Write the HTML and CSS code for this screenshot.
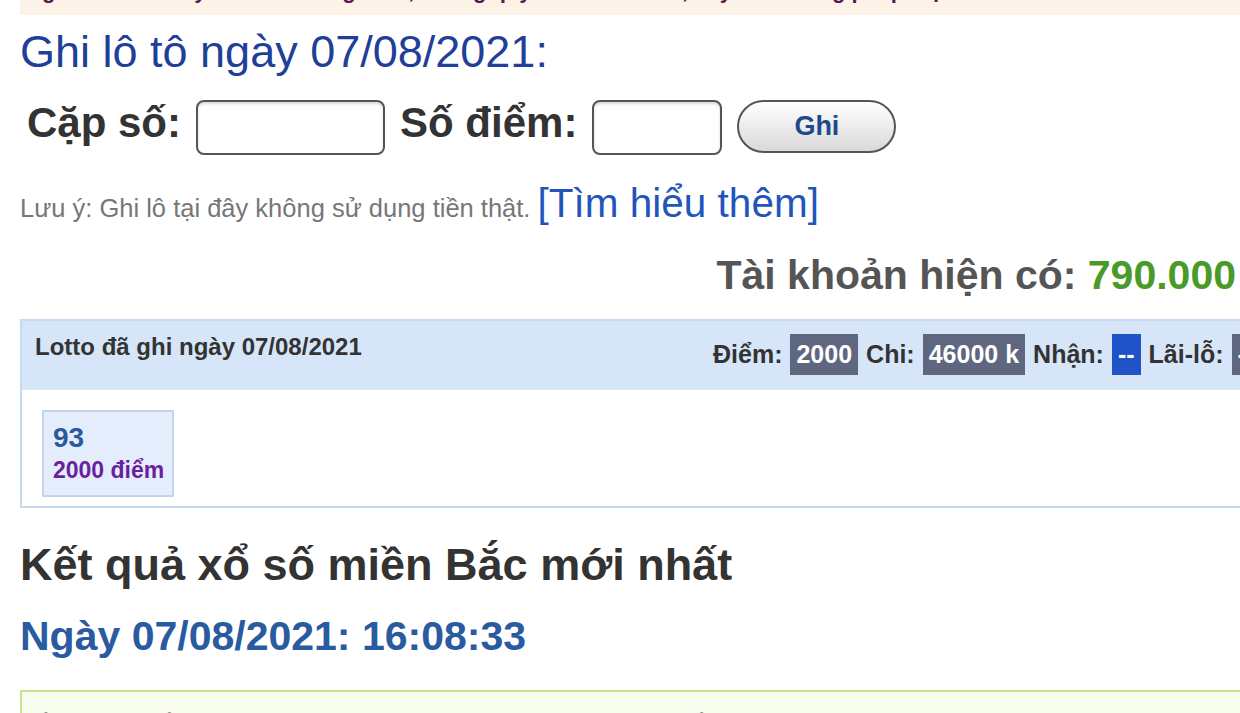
FILE: index.html
```html
<!DOCTYPE html>
<html lang="vi">
<head>
  <meta charset="UTF-8" />
  <meta name="viewport" content="width=device-width, initial-scale=1.0"/>
  <title>Ghi lô tô</title>
  <link rel="stylesheet" href="styles.css">
</head>
<body>
  <div class="page">
    <div class="notice">
      <p>Người chơi lưu ý: lô tô chỉ để giải trí, không quy đổi thành tiền, hãy chơi đúng pháp luật.</p>
    </div>

    <h1 class="title">Ghi lô tô ngày 07/08/2021:</h1>

    <form class="bet-form" onsubmit="return false;">
      <label class="bet-label">Cặp số:</label>
      <input type="text" class="bet-input bet-pair">
      <label class="bet-label">Số điểm:</label>
      <input type="text" class="bet-input bet-points">
      <button type="submit" class="bet-btn">Ghi</button>
    </form>

    <p class="note">Lưu ý: Ghi lô tại đây không sử dụng tiền thật. <a href="#" class="note-link">[Tìm hiểu thêm]</a></p>

    <p class="account">Tài khoản hiện có: <span class="account-money">790.000</span></p>

    <div class="panel">
      <div class="panel-head">
        <div class="panel-title">Lotto đã ghi ngày 07/08/2021</div>
        <div class="stats">
          <span>Điểm:</span><span class="badge">2000</span>
          <span>Chi:</span><span class="badge">46000 k</span>
          <span>Nhận:</span><span class="badge badge-blue">--</span>
          <span>Lãi-lỗ:</span><span class="badge">--</span>
        </div>
      </div>
      <div class="panel-body">
        <div class="ticket">
          <div class="ticket-num">93</div>
          <div class="ticket-pts">2000 điểm</div>
        </div>
      </div>
    </div>

    <h2 class="result-title">Kết quả xổ số miền Bắc mới nhất</h2>
    <h3 class="result-date">Ngày 07/08/2021: 16:08:33</h3>

    <div class="result-box">
      <p>ấn vé ở số mở sớm, xem ngay nơi này mọi giờ, số mới cập nhật sớm</p>
    </div>
  </div>
</body>
</html>
```

FILE: styles.css
```css
body {
  margin: 0;
  padding: 0;
  font-family: "Liberation Sans", Arial, sans-serif;
  background: #fff;
  color: #333;
  overflow: hidden;
}

.page {
  width: 1300px;
  padding-left: 20px;
}

.notice {
  height: 15px;
  overflow: hidden;
  background: #fcf2e8;
}

.notice p {
  margin: -22px 0 0 6px;
  font-size: 22px;
  line-height: 26px;
  font-weight: bold;
  color: #5a1a50;
  white-space: nowrap;
}

.title {
  margin: 11px 0 0;
  font-size: 45px;
  line-height: 52px;
  font-weight: normal;
  color: #1f3f98;
}

.bet-form {
  display: flex;
  align-items: flex-start;
  gap: 15px;
  margin: 22px 0 0 7px;
}

.bet-label {
  font-size: 42px;
  line-height: 46px;
  font-weight: bold;
  color: #333;
}

.bet-input {
  height: 55px;
  box-sizing: border-box;
  border: 2px solid #555;
  border-radius: 8px;
  box-shadow: inset 0 2px 3px rgba(0,0,0,0.15);
  background: #fff;
}

.bet-pair {
  width: 189px;
}

.bet-points {
  width: 130px;
}

.bet-btn {
  width: 159px;
  height: 53px;
  border: 2px solid #555;
  border-radius: 30px;
  background: linear-gradient(#ffffff, #d9d9d9);
  font-family: inherit;
  font-size: 27px;
  font-weight: bold;
  color: #1e4a8c;
  cursor: pointer;
}

.note {
  margin: 25px 0 0;
  font-size: 25.5px;
  line-height: 46px;
  color: #777;
}

.note-link {
  font-size: 40.5px;
  color: #2255bb;
  text-decoration: none;
}

.account {
  width: 1216px;
  margin: 20px 0 0;
  text-align: right;
  font-size: 41px;
  line-height: 48px;
  font-weight: bold;
  color: #555;
}

.account-money {
  color: #4a9a2a;
}

.panel {
  margin-top: 20px;
  border: 2px solid #c6daf1;
}

.panel-head {
  display: flex;
  align-items: flex-start;
  height: 69px;
  box-sizing: border-box;
  padding: 11px 0 0 13px;
  background: #d6e6f8;
}

.panel-title {
  flex: 0 0 678px;
  font-size: 24px;
  line-height: 30px;
  font-weight: bold;
  color: #333;
}

.stats {
  display: flex;
  align-items: center;
  gap: 8px;
  margin-top: 2px;
  font-size: 25px;
  line-height: 29px;
  font-weight: bold;
  color: #333;
}

.badge {
  padding: 6px;
  background: #5f6780;
  color: #fff;
}

.badge-blue {
  background: #2052c8;
}

.panel-body {
  padding: 20px 0 9px 20px;
  background: #fff;
}

.ticket {
  display: inline-block;
  padding: 10px 8px 9px 9px;
  background: #e4edfc;
  border: 2px solid #c2d2ef;
  font-weight: bold;
}

.ticket-num {
  font-size: 28px;
  line-height: 32px;
  color: #2a5aa0;
}

.ticket-pts {
  font-size: 23px;
  line-height: 32px;
  color: #6b1fa0;
}

.result-title {
  margin: 31px 0 0;
  font-size: 45px;
  line-height: 52px;
  font-weight: bold;
  color: #333;
}

.result-date {
  margin: 21px 0 0;
  font-size: 41px;
  line-height: 48px;
  font-weight: bold;
  color: #2a5aa0;
}

.result-box {
  margin-top: 30px;
  height: 60px;
  border: 2px solid #c5e48c;
  background: #f7fcec;
}

.result-box p {
  margin: 0;
  padding: 16px 0 0 10px;
  font-size: 28px;
  line-height: 34px;
  font-weight: bold;
  color: #444;
  white-space: nowrap;
}
```
